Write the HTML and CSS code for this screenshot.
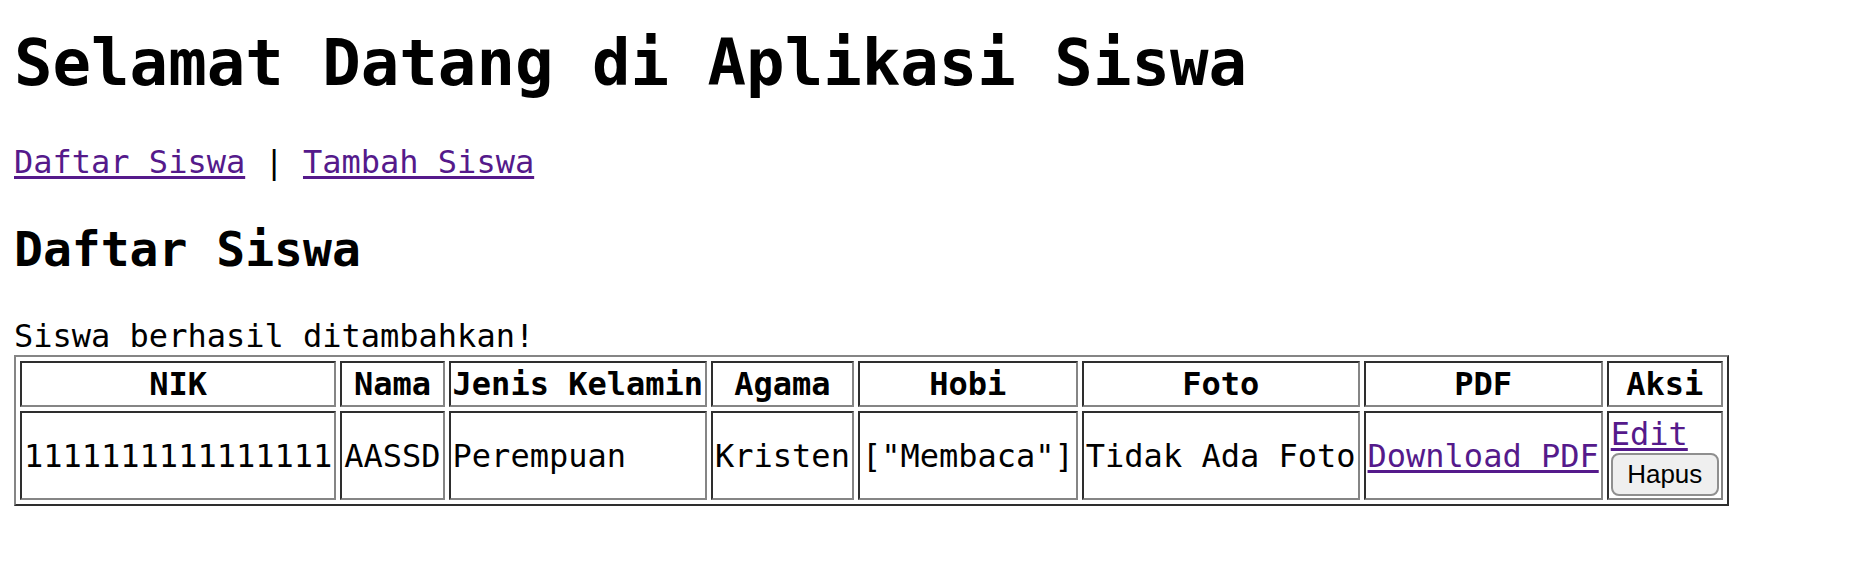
FILE: index.html
```html
<!DOCTYPE html>
<html lang="id">
<head>
<meta charset="utf-8">
<title>Aplikasi Siswa</title>
<link rel="stylesheet" href="styles.css">
</head>
<body>
<h1 class="title">Selamat Datang di Aplikasi Siswa</h1>
<p class="nav"><a href="#" class="link">Daftar Siswa</a> | <a href="#" class="link">Tambah Siswa</a></p>
<h2 class="subtitle">Daftar Siswa</h2>
<div class="message">Siswa berhasil ditambahkan!</div>
<table class="data">
  <thead>
    <tr>
      <th>NIK</th>
      <th>Nama</th>
      <th>Jenis Kelamin</th>
      <th>Agama</th>
      <th>Hobi</th>
      <th>Foto</th>
      <th>PDF</th>
      <th>Aksi</th>
    </tr>
  </thead>
  <tbody>
    <tr>
      <td>1111111111111111</td>
      <td>AASSD</td>
      <td>Perempuan</td>
      <td>Kristen</td>
      <td>["Membaca"]</td>
      <td>Tidak Ada Foto</td>
      <td><a href="#" class="link">Download PDF</a></td>
      <td>
        <a href="#" class="link action-link">Edit</a>
        <form class="action-form"><button type="button" class="btn">Hapus</button></form>
      </td>
    </tr>
  </tbody>
</table>
</body>
</html>
```
FILE: styles.css
```css
html {
  background: #ffffff;
}
body {
  margin: 0 14px 16px;
  font-family: "DejaVu Sans Mono", monospace;
  font-size: 32px;
  color: #000000;
}
.title {
  font-size: 64px;
  font-weight: bold;
  margin: 26px 0 43px;
}
.nav {
  margin: 32px 0;
}
.link {
  color: #551a8b;
  text-decoration: underline;
  text-decoration-thickness: 3px;
  text-underline-offset: 3px;
}
.subtitle {
  font-size: 48px;
  font-weight: bold;
  margin: 40px 0;
}
.message {
  margin: 0;
}
.data {
  border-collapse: separate;
  border-spacing: 4px;
  border: 2px solid;
  border-color: #858585 #2e2e2e #2e2e2e #858585;
  font-size: 32px;
}
.data th,
.data td {
  padding: 2px;
  border: 2px solid;
  border-color: #2e2e2e #858585 #858585 #2e2e2e;
  white-space: nowrap;
}
.data th {
  font-weight: bold;
  text-align: center;
}
.data td {
  text-align: left;
  vertical-align: middle;
}
.action-link {
  display: block;
  width: max-content;
}
.action-form {
  margin: 0;
}
.btn {
  display: block;
  font-family: "Liberation Sans", Arial, sans-serif;
  font-size: 26px;
  line-height: 30px;
  color: #000000;
  background: #efefef;
  border: 2px solid #8f8f8f;
  border-radius: 8px;
  padding: 4px 14px 5px;
  width: 108px;
  margin: 0;
}
```
